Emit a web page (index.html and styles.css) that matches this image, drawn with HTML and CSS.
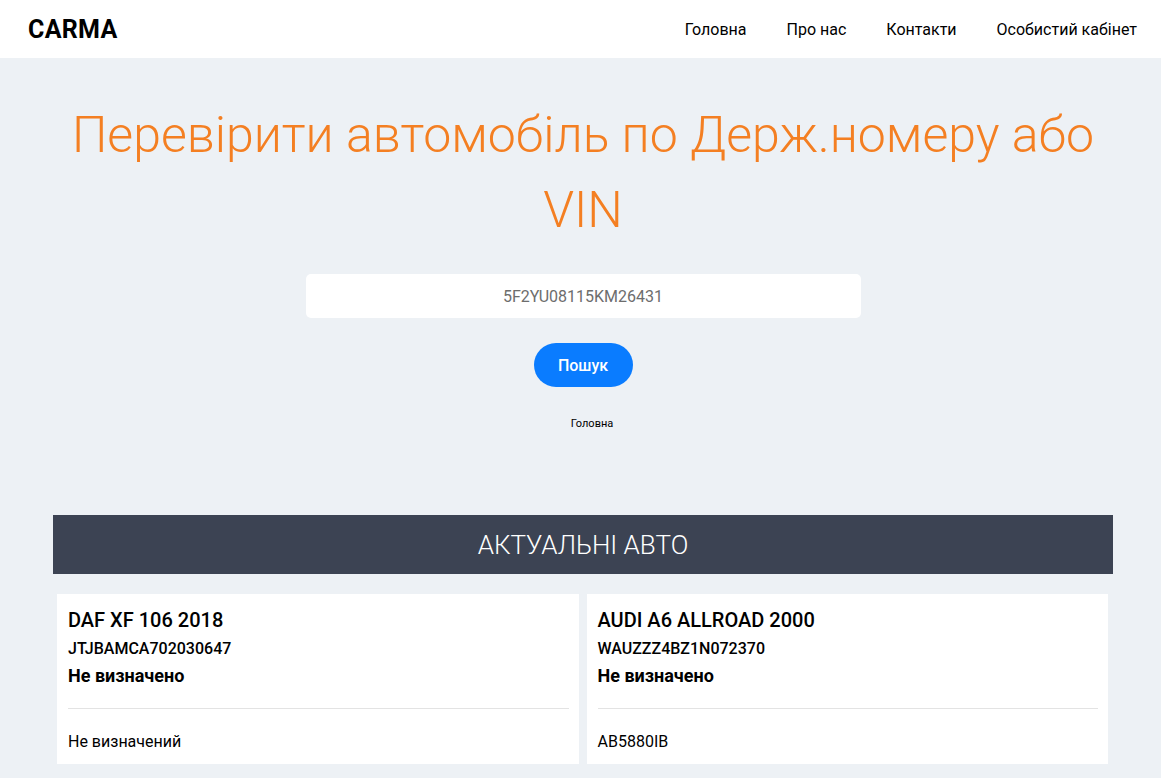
FILE: index.html
```html
<!DOCTYPE html>
<html lang="uk">
<head>
    <meta charset="UTF-8">
    <meta name="viewport" content="width=device-width, initial-scale=1.0">
    <title>CARMA</title>
    <link rel="stylesheet" href="styles.css">
</head>
<body>
    <header class="header">
        <div class="logo">CARMA</div>
        <nav class="nav">
            <a href="#">Головна</a>
            <a href="#">Про нас</a>
            <a href="#">Контакти</a>
            <a href="#">Особистий кабінет</a>
        </nav>
    </header>

    <main class="container">
        <section class="search">
            <h1>Перевірити автомобіль по Держ.номеру або VIN</h1>
            <input type="text" class="search-input" placeholder="5F2YU08115KM26431">
            <button type="button" class="search-btn">Пошук</button>
            <div class="crumb">Головна</div>
        </section>

        <section class="actual">
            <h2 class="actual-title">АКТУАЛЬНІ АВТО</h2>
            <div class="cards">
                <div class="card">
                    <div class="card-name">DAF XF 106 2018</div>
                    <div class="card-vin">JTJBAMCA702030647</div>
                    <div class="card-status">Не визначено</div>
                    <div class="card-plate">Не визначений</div>
                </div>
                <div class="card">
                    <div class="card-name">AUDI A6 ALLROAD 2000</div>
                    <div class="card-vin">WAUZZZ4BZ1N072370</div>
                    <div class="card-status">Не визначено</div>
                    <div class="card-plate">AB5880IB</div>
                </div>
            </div>
        </section>
    </main>
</body>
</html>
```

FILE: styles.css
```css
body {
    font-family: Roboto, "Noto Sans", sans-serif;
    background-color: #edf1f5;
    margin: 0;
    padding: 0;
    color: #000;
}
.header {
    background-color: #fff;
    height: 58px;
    display: flex;
    align-items: center;
    justify-content: space-between;
    padding: 0 24px 0 28px;
}
.logo {
    font-size: 25px;
    font-weight: 700;
    letter-spacing: 0.3px;
}
.nav {
    display: flex;
    gap: 40px;
}
.nav a {
    color: #000;
    text-decoration: none;
    font-size: 16px;
}
.container {
    width: 1060px;
    margin-left: 53px;
}
.search {
    display: flex;
    flex-direction: column;
    align-items: center;
    padding-top: 40px;
}
h1 {
    color: #f47f22;
    font-weight: 300;
    font-size: 50px;
    line-height: 75px;
    margin: 0 0 26px;
    text-align: center;
}
.search-input {
    width: 555px;
    height: 44px;
    box-sizing: border-box;
    border: none;
    border-radius: 5px;
    background-color: #fff;
    text-align: center;
    font-family: inherit;
    font-size: 16px;
    outline: none;
}
.search-input::placeholder {
    color: #6d6d6d;
}
.search-btn {
    margin-top: 25px;
    width: 99px;
    height: 44px;
    border: none;
    border-radius: 22px;
    background-color: #0a7cff;
    color: #fff;
    font-family: inherit;
    font-size: 16px;
    font-weight: 500;
    cursor: pointer;
}
.crumb {
    margin-top: 30px;
    font-size: 11px;
    margin-left: 18px;
}
.actual {
    margin-top: 85px;
}
.actual-title {
    margin: 0;
    height: 59px;
    background-color: #3c4353;
    color: #fff;
    font-weight: 300;
    font-size: 26px;
    display: flex;
    align-items: center;
    justify-content: center;
}
.cards {
    display: grid;
    grid-template-columns: 1fr 1fr;
    gap: 8px;
    padding: 20px 5px 0 4px;
}
.card {
    background-color: #fff;
    padding: 13px 10px 11px 11px;
}
.card-name {
    font-size: 20px;
    font-weight: 500;
    line-height: 26px;
}
.card-vin {
    font-size: 16px;
    font-weight: 500;
    margin-top: 6px;
    line-height: 20px;
}
.card-status {
    font-size: 18px;
    font-weight: 700;
    margin-top: 5px;
    line-height: 24px;
    padding-bottom: 20px;
    border-bottom: 1px solid #e3e3e3;
}
.card-plate {
    font-size: 16px;
    margin-top: 22px;
    line-height: 22px;
}
```
